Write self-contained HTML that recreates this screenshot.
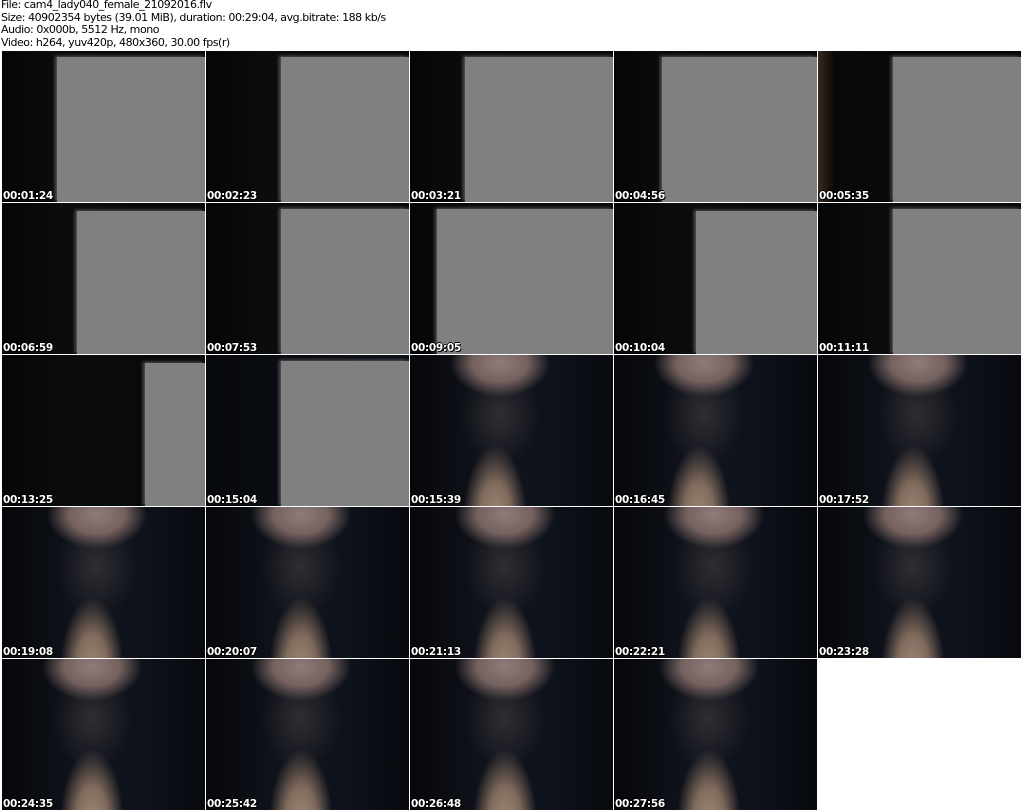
<!DOCTYPE html>
<html><head><style>
body{margin:0;width:1024px;height:811px;background:#fff;position:relative;overflow:hidden;font-family:"DejaVu Sans","Liberation Sans",sans-serif}
.hdr{position:absolute;left:1px;top:-1px;font-size:11px;line-height:12.5px;color:#000;letter-spacing:-0.45px}
.c{position:absolute;width:203px;height:151px;background:linear-gradient(90deg,#050506,#0b0c0e 30%,#08090a);overflow:hidden}
.g{position:absolute;right:0;bottom:0;background:#808080;box-shadow:-2px -1px 3px #555}
.t{position:absolute;left:1px;bottom:0px;color:#fff;font-weight:bold;font-size:10.5px;letter-spacing:-0.3px;text-shadow:1px 1px 0 #000,-1px 0 0 #000,0 -1px 0 #000}
.f{background:
radial-gradient(ellipse 50px 34px at var(--cx) 8px,#8e7c7c 0,#75625f 55%,rgba(40,35,40,0) 100%),
radial-gradient(ellipse 32px 75px at var(--vx) 165px,#a08a78 0,#806a5c 50%,rgba(20,22,30,0) 100%),
radial-gradient(ellipse 40px 50px at var(--cx) 60px,rgba(70,62,64,.6),rgba(0,0,0,0) 100%),
linear-gradient(90deg,#06070a,#10141d 40%,#0e121b 70%,#07090e)}
</style></head><body>
<div class="hdr">File: cam4_lady040_female_21092016.flv<br>Size: 40902354 bytes (39.01 MiB), duration: 00:29:04, avg.bitrate: 188 kb/s<br>Audio: 0x000b, 5512 Hz, mono<br>Video: h264, yuv420p, 480x360, 30.00 fps(r)</div>

<div class="c" style="left:2px;top:51px"><div class="g" style="left:55px;top:6px"></div><div class="t">00:01:24</div></div>
<div class="c" style="left:206px;top:51px"><div class="g" style="left:75px;top:6px"></div><div class="t">00:02:23</div></div>
<div class="c" style="left:410px;top:51px"><div class="g" style="left:55px;top:6px"></div><div class="t">00:03:21</div></div>
<div class="c" style="left:614px;top:51px"><div class="g" style="left:48px;top:6px"></div><div class="t">00:04:56</div></div>
<div class="c" style="left:818px;top:51px;background:linear-gradient(90deg,#3a2a20,#0a0908 8%,#060606)"><div class="g" style="left:75px;top:6px"></div><div class="t">00:05:35</div></div>

<div class="c" style="left:2px;top:203px"><div class="g" style="left:75px;top:8px"></div><div class="t">00:06:59</div></div>
<div class="c" style="left:206px;top:203px"><div class="g" style="left:75px;top:6px"></div><div class="t">00:07:53</div></div>
<div class="c" style="left:410px;top:203px"><div class="g" style="left:27px;top:6px"></div><div class="t">00:09:05</div></div>
<div class="c" style="left:614px;top:203px"><div class="g" style="left:82px;top:8px"></div><div class="t">00:10:04</div></div>
<div class="c" style="left:818px;top:203px"><div class="g" style="left:75px;top:6px"></div><div class="t">00:11:11</div></div>

<div class="c" style="left:2px;top:355px"><div class="g" style="left:143px;top:8px"></div><div class="t">00:13:25</div></div>
<div class="c" style="left:206px;top:355px;background:linear-gradient(90deg,#07090d,#0e121a)"><div class="g" style="left:75px;top:6px"></div><div class="t">00:15:04</div></div>
<div class="c f" style="left:410px;top:355px;--cx:90px;--vx:85px"><div class="t">00:15:39</div></div>
<div class="c f" style="left:614px;top:355px;--cx:90px;--vx:85px"><div class="t">00:16:45</div></div>
<div class="c f" style="left:818px;top:355px;--cx:100px;--vx:95px"><div class="t">00:17:52</div></div>

<div class="c f" style="left:2px;top:507px;--cx:95px;--vx:90px"><div class="t">00:19:08</div></div>
<div class="c f" style="left:206px;top:507px;--cx:95px;--vx:95px"><div class="t">00:20:07</div></div>
<div class="c f" style="left:410px;top:507px;--cx:95px;--vx:95px"><div class="t">00:21:13</div></div>
<div class="c f" style="left:614px;top:507px;--cx:100px;--vx:95px"><div class="t">00:22:21</div></div>
<div class="c f" style="left:818px;top:507px;--cx:95px;--vx:95px"><div class="t">00:23:28</div></div>

<div class="c f" style="left:2px;top:659px;--cx:90px;--vx:90px"><div class="t">00:24:35</div></div>
<div class="c f" style="left:206px;top:659px;--cx:95px;--vx:95px"><div class="t">00:25:42</div></div>
<div class="c f" style="left:410px;top:659px;--cx:95px;--vx:95px"><div class="t">00:26:48</div></div>
<div class="c f" style="left:614px;top:659px;--cx:95px;--vx:95px"><div class="t">00:27:56</div></div>
</body></html>
